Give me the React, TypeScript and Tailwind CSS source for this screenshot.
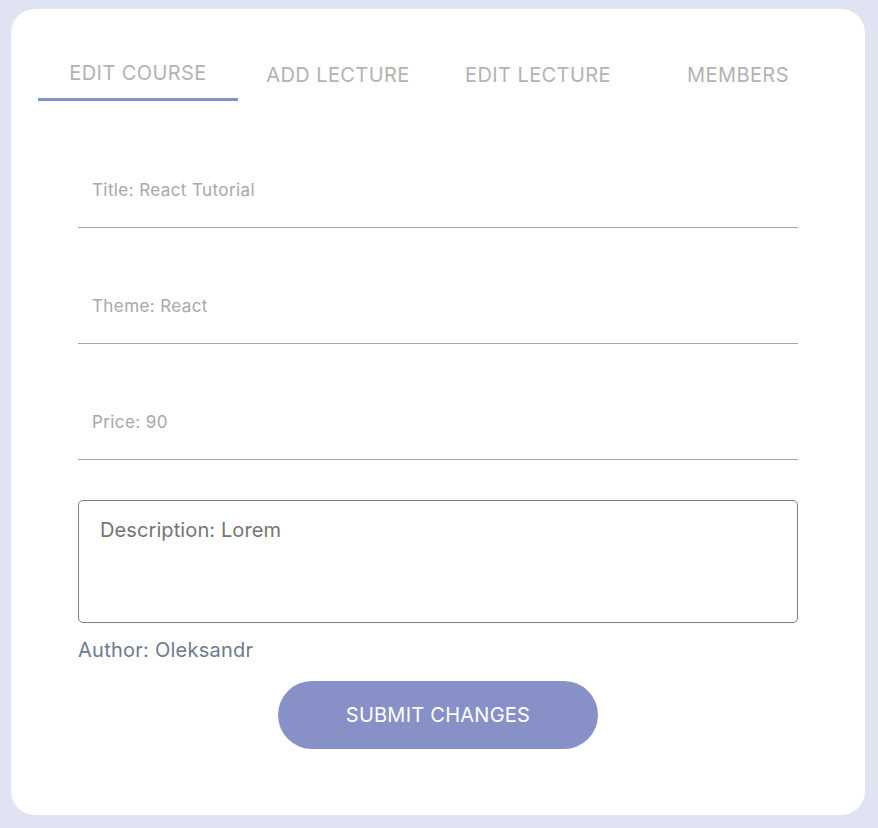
import React from "react";

const tabs = ["EDIT COURSE", "ADD LECTURE", "EDIT LECTURE", "MEMBERS"];

export default function App() {
  return (
    <div
      className="w-[878px] h-[828px] bg-[#e0e3f1] pt-[9px] pl-[11px]"
      style={{ fontFamily: "Inter, 'Noto Sans', sans-serif" }}
    >
      <div className="w-[854px] h-[806px] bg-white rounded-[24px] pl-[27px] pr-[27px] pt-[36px]">
        <div className="flex w-[800px]">
          {tabs.map((t, i) => (
            <div
              key={t}
              className={
                i === 0
                  ? "w-[200px] h-[56px] flex items-start justify-center pt-[15px] text-[20px] leading-[26px] tracking-[0.4px] text-[#b3b3b3] border-b-[3px] border-[#8891c7]"
                  : "w-[200px] h-[56px] flex items-start justify-center pt-[17px] text-[20px] leading-[26px] tracking-[0.4px] text-[#b3b3b3]"
              }
            >
              {t}
            </div>
          ))}
        </div>
        <div className="w-[720px] ml-[40px] pt-[11px]">
          {["Title: React Tutorial", "Theme: React", "Price: 90"].map((f) => (
            <div
              key={f}
              className="border-b border-[#a6a6a6] pt-[66px] pb-[25px] pl-[14px] text-[17px] leading-[24px] tracking-[0.4px] text-[#a8a8a8]"
            >
              {f}
            </div>
          ))}
          <div className="mt-[40px] h-[123px] border border-[#7d7d7d] rounded-[5px] pl-[21px] pt-[16px] text-[20px] leading-[26px] tracking-[0.1px] text-[#747474]">
            Description: Lorem
          </div>
          <div className="mt-[13px] text-[20px] leading-[28px] tracking-[0.25px] text-[#6c7b8d]">
            Author: Oleksandr
          </div>
          <div className="flex justify-center mt-[17px]">
            <button className="w-[320px] h-[68px] rounded-full bg-[#8891c7] text-white text-[20px] leading-[26px] tracking-[0.25px]">
              SUBMIT CHANGES
            </button>
          </div>
        </div>
      </div>
    </div>
  );
}
